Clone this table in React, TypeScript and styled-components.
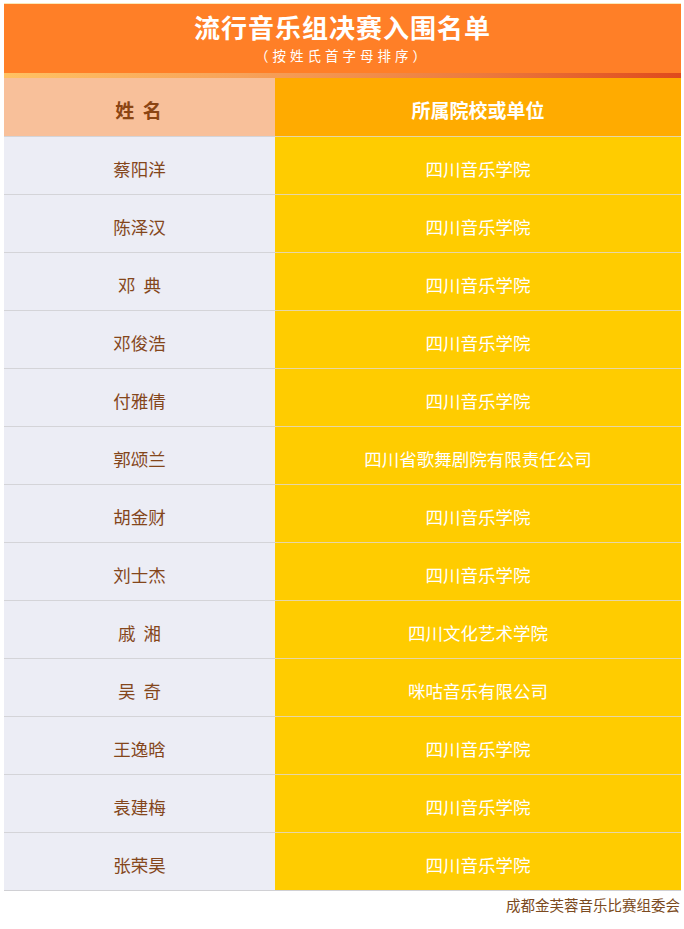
import React from "react";
import styled, { createGlobalStyle } from "styled-components";

const Global = createGlobalStyle`
  html, body { margin: 0; padding: 0; background: #ffffff; }
  body { font-family: "Noto Sans CJK SC", "Noto Sans", sans-serif; }
`;

const Page = styled.div`
  padding: 3px 3px 0 4px;
  width: 684px;
  box-sizing: border-box;
`;

const Banner = styled.div`
  border-top: 1px solid #fbe9b8;
  background: #ff7f27;
  height: 70px;
  display: flex;
  flex-direction: column;
  align-items: center;
  color: #ffffff;
  box-sizing: border-box;
  padding-top: 9px;
`;

const Title = styled.div`
  font-size: 26px;
  font-weight: 700;
  line-height: 28px;
  letter-spacing: 1px;
`;

const Subtitle = styled.div`
  font-size: 13.5px;
  line-height: 16px;
  letter-spacing: 4px;
  margin-top: 6px;
`;

const Strip = styled.div`
  height: 5px;
  background: linear-gradient(90deg, #ffc262 0%, #f7a35a 35%, #ec7a3e 70%, #df4a1c 100%);
`;

const Table = styled.div`
  display: grid;
  grid-template-columns: 271px 1fr;
`;

const HeadCell = styled.div<{ $alt?: boolean }>`
  height: 58px;
  box-sizing: border-box;
  padding-top: 5px;
  display: flex;
  align-items: center;
  justify-content: center;
  font-size: 19px;
  font-weight: 700;
  background: ${(p) => (p.$alt ? "#ffab00" : "#f8c09a")};
  color: ${(p) => (p.$alt ? "#ffffff" : "#8b4513")};
  letter-spacing: ${(p) => (p.$alt ? "0" : "2px")};
`;

const Cell = styled.div<{ $alt?: boolean }>`
  height: 58px;
  box-sizing: border-box;
  padding-top: 5px;
  border-top: 1px solid ${(p) => (p.$alt ? "#e6d6a6" : "#d4d4d8")};
  display: flex;
  align-items: center;
  justify-content: center;
  font-size: 17.5px;
  background: ${(p) => (p.$alt ? "#ffcc00" : "#ecedf5")};
  color: ${(p) => (p.$alt ? "#ffffff" : "#84461b")};
`;

const BottomLine = styled.div`
  grid-column: 1 / -1;
  height: 1px;
  background: #d0d0d4;
`;

const Footer = styled.div`
  text-align: right;
  font-size: 14.5px;
  color: #7b4a20;
  padding: 5px 1px 0 0;
  line-height: 18px;
`;

const rows: [string, string][] = [
  ["蔡阳洋", "四川音乐学院"],
  ["陈泽汉", "四川音乐学院"],
  ["邓  典", "四川音乐学院"],
  ["邓俊浩", "四川音乐学院"],
  ["付雅倩", "四川音乐学院"],
  ["郭颂兰", "四川省歌舞剧院有限责任公司"],
  ["胡金财", "四川音乐学院"],
  ["刘士杰", "四川音乐学院"],
  ["戚  湘", "四川文化艺术学院"],
  ["吴  奇", "咪咕音乐有限公司"],
  ["王逸晗", "四川音乐学院"],
  ["袁建梅", "四川音乐学院"],
  ["张荣昊", "四川音乐学院"],
];

const Name = styled.span`
  white-space: pre;
`;

export default function App() {
  return (
    <>
      <Global />
      <Page>
        <Banner>
          <Title>流行音乐组决赛入围名单</Title>
          <Subtitle>（按姓氏首字母排序）</Subtitle>
        </Banner>
        <Strip />
        <Table>
          <HeadCell>姓 名</HeadCell>
          <HeadCell $alt>所属院校或单位</HeadCell>
          {rows.map(([n, u], i) => (
            <React.Fragment key={i}>
              <Cell>
                <Name>{n}</Name>
              </Cell>
              <Cell $alt>{u}</Cell>
            </React.Fragment>
          ))}
          <BottomLine />
        </Table>
        <Footer>成都金芙蓉音乐比赛组委会</Footer>
      </Page>
    </>
  );
}
